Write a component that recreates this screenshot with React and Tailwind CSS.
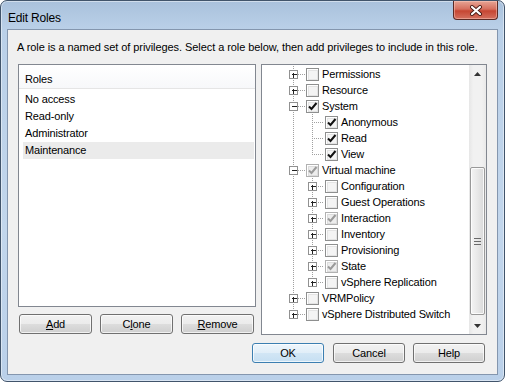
import React from 'react';

const roles = ['No access', 'Read-only', 'Administrator', 'Maintenance'];

// tree rows as shown in the privileges pane (scrolled part way down)
const tree = [
  { label: 'Permissions', lvl: 1, exp: 'plus', chk: 'off' },
  { label: 'Resource', lvl: 1, exp: 'plus', chk: 'off' },
  { label: 'System', lvl: 1, exp: 'minus', chk: 'on' },
  { label: 'Anonymous', lvl: 2, chk: 'on' },
  { label: 'Read', lvl: 2, chk: 'on' },
  { label: 'View', lvl: 2, chk: 'on', last: true },
  { label: 'Virtual machine', lvl: 1, exp: 'minus', chk: 'part' },
  { label: 'Configuration', lvl: 2, exp: 'plus', chk: 'off' },
  { label: 'Guest Operations', lvl: 2, exp: 'plus', chk: 'off' },
  { label: 'Interaction', lvl: 2, exp: 'plus', chk: 'part' },
  { label: 'Inventory', lvl: 2, exp: 'plus', chk: 'off' },
  { label: 'Provisioning', lvl: 2, exp: 'plus', chk: 'off' },
  { label: 'State', lvl: 2, exp: 'plus', chk: 'part' },
  { label: 'vSphere Replication', lvl: 2, exp: 'plus', chk: 'off', last: true },
  { label: 'VRMPolicy', lvl: 1, exp: 'plus', chk: 'off' },
  { label: 'vSphere Distributed Switch', lvl: 1, exp: 'plus', chk: 'off', last: true },
];

const dot = { stroke: '#a0a0a0', strokeDasharray: '1 1', shapeRendering: 'crispEdges' };

function Expander({ cx, type }) {
  return (
    <g shapeRendering="crispEdges">
      <rect x={cx - 3.5} y={4.5} width={8} height={8} fill="#fff" stroke="#919191" />
      <line x1={cx - 1.5} y1={8.5} x2={cx + 3.5} y2={8.5} stroke="#222" />
      {type === 'plus' && <line x1={cx + 0.5} y1={6.5} x2={cx + 0.5} y2={11.5} stroke="#222" />}
    </g>
  );
}

function Check({ x, state }) {
  const on = state === 'on';
  const part = state === 'part';
  return (
    <g>
      <rect x={x + 0.5} y={2.5} width={12} height={12} fill="#fff" stroke={part ? '#b1b1b1' : '#8e8f8f'} shapeRendering="crispEdges" />
      <rect x={x + 2} y={4} width={9} height={9} fill={part ? '#ededed' : '#f4f4f4'} stroke={part ? '#dcdcdc' : '#e4e4e4'} shapeRendering="crispEdges" />
      {(on || part) && (
        <path d={`M${x + 3} ${8.5} L${x + 5.5} ${11} L${x + 10.5} ${5}`} fill="none" stroke={on ? '#111' : '#9a9a9a'} strokeWidth="2" />
      )}
    </g>
  );
}

function TreeRow({ row, i }) {
  const c1 = 31;
  const c2 = 50;
  const lastTop = i === tree.length - 1;
  const w = row.lvl === 1 ? 58 : 77;
  return (
    <div className="flex items-center h-[16px]">
      <svg width={w} height={16} className="shrink-0">
        <line x1={c1 + 0.5} y1={0} x2={c1 + 0.5} y2={lastTop ? 9 : 16} {...dot} />
        {row.lvl === 1 && <line x1={c1 + 5} y1={8.5} x2={43} y2={8.5} {...dot} />}
        {row.lvl === 2 && (
          <>
            <line x1={c2 + 0.5} y1={0} x2={c2 + 0.5} y2={row.last ? 9 : 16} {...dot} />
            <line x1={c2 + 2} y1={8.5} x2={62} y2={8.5} {...dot} />
          </>
        )}
        {row.exp && <Expander cx={row.lvl === 1 ? c1 : c2} type={row.exp} />}
        <Check x={row.lvl === 1 ? 44 : 63} state={row.chk} />
      </svg>
      <span className="ml-[2px] whitespace-nowrap">{row.label}</span>
    </div>
  );
}

function Btn({ children, primary, narrow }) {
  return (
    <button
      className={`${narrow ? 'w-[72px]' : 'w-[73px]'} h-[20px] rounded-[3px] border text-black leading-none shadow-[inset_0_0_0_1px_rgba(255,255,255,0.7)] ${
        primary
          ? 'border-[#3c7fb1] bg-[linear-gradient(180deg,#eef6fc_0%,#e1eef8_50%,#d2e6f5_50%,#c6dff2_100%)]'
          : 'border-[#707070] bg-[linear-gradient(180deg,#f2f2f2_0%,#ebebeb_50%,#dddddd_50%,#cfcfcf_100%)]'
      }`}
    >
      {children}
    </button>
  );
}

export default function App() {
  return (
    <div className="w-[505px] h-[382px] overflow-hidden rounded-[7px] border border-[#41546b] bg-[linear-gradient(180deg,#a9c1dc_0px,#bad0e8_28px,#c2d6ec_60%,#bad0e9_100%)] flex flex-col font-['Liberation_Sans',Arial,sans-serif] text-[11px] tracking-[-0.15px] text-black shadow-[inset_0_0_0_1px_rgba(255,255,255,0.45)]">
      {/* title bar */}
      <div className="h-[28px] flex shrink-0">
        <div className="pl-[7px] pt-[8px] text-[12px] tracking-[-0.2px]">Edit Roles</div>
        <div className="ml-auto mr-[6px] w-[45px] h-[19px] rounded-b-[4px] border border-t-0 border-[#5b2a25] bg-[linear-gradient(180deg,#e7a595_0%,#d66f5e_45%,#c64633_55%,#d4705f_100%)] shadow-[inset_0_0_0_1px_rgba(255,210,200,0.45)] flex items-center justify-center">
          <svg width="14" height="11" viewBox="0 0 14 11">
            <path d="M3 2 L11 9 M11 2 L3 9" stroke="#4a1c16" strokeWidth="4" strokeLinecap="round" />
            <path d="M3 2 L11 9 M11 2 L3 9" stroke="#fff" strokeWidth="2.2" strokeLinecap="round" />
          </svg>
        </div>
      </div>

      {/* client area */}
      <div className="mx-[6px] h-[346px] border border-[#8496ae] bg-[#f0f0f0] flex flex-col">
        <div className="pl-[9px] pt-[9px] leading-[16px] whitespace-nowrap tracking-[-0.07px]">
          A role is a named set of privileges. Select a role below, then add privileges to include in this role.
        </div>

        <div className="mt-[9px] pl-[10px] pr-[10px] flex gap-[5px]">
          {/* roles list */}
          <div className="w-[238px] flex flex-col">
            <div className="h-[243px] border border-[#828790] bg-white flex flex-col">
              <div className="h-[24px] shrink-0 border-b border-[#e5e5e5] bg-[linear-gradient(180deg,#ffffff,#f7f8fa)] pl-[6px] pt-[6px]">Roles</div>
              <div className="mt-[2px] flex flex-col">
                {roles.map((r) => (
                  <div
                    key={r}
                    className={`h-[17px] ml-[4px] mr-[1px] pl-[2px] flex items-center ${r === 'Maintenance' ? 'bg-[#ebebeb]' : ''}`}
                  >
                    {r}
                  </div>
                ))}
              </div>
            </div>
            <div className="mt-[7px] ml-[1px] flex gap-[8px]">
              <Btn><span className="underline">A</span>dd</Btn>
              <Btn>C<span className="underline">l</span>one</Btn>
              <Btn><span className="underline">R</span>emove</Btn>
            </div>
          </div>

          {/* privileges tree */}
          <div className="w-[226px] h-[271px] border border-[#828790] bg-white flex">
            <div className="flex-1 pt-[1px] overflow-hidden">
              {tree.map((row, i) => (
                <TreeRow key={row.label} row={row} i={i} />
              ))}
            </div>
            <div className="w-[17px] shrink-0 flex flex-col bg-[linear-gradient(90deg,#e6e6e6,#f1f1f1_25%,#f1f1f1_75%,#e9e9e9)]">
              <div className="h-[17px] flex items-center justify-center">
                <svg width="7" height="4"><polygon points="0,4 3.5,0 7,4" fill="#333" /></svg>
              </div>
              <div className="h-[85px]" />
              <div className="mx-[1px] h-[148px] rounded-[2px] border border-[#999999] bg-[linear-gradient(90deg,#f4f4f4,#e8e8e8_50%,#d9d9d9)] shadow-[inset_0_0_0_1px_rgba(255,255,255,0.8)] flex flex-col items-center justify-center gap-[2px]">
                <div className="w-[7px] h-[1px] bg-[#6a6a6a]" />
                <div className="w-[7px] h-[1px] bg-[#6a6a6a]" />
                <div className="w-[7px] h-[1px] bg-[#6a6a6a]" />
              </div>
              <div className="flex-1" />
              <div className="h-[17px] flex items-center justify-center">
                <svg width="7" height="4"><polygon points="0,0 7,0 3.5,4" fill="#333" /></svg>
              </div>
            </div>
          </div>
        </div>

        <div className="mt-[8px] pr-[12px] flex justify-end gap-[8px]">
          <div className="flex gap-[9px]">
            <Btn primary narrow>OK</Btn>
            <Btn narrow>Cancel</Btn>
          </div>
          <Btn narrow>Help</Btn>
        </div>
      </div>
    </div>
  );
}
